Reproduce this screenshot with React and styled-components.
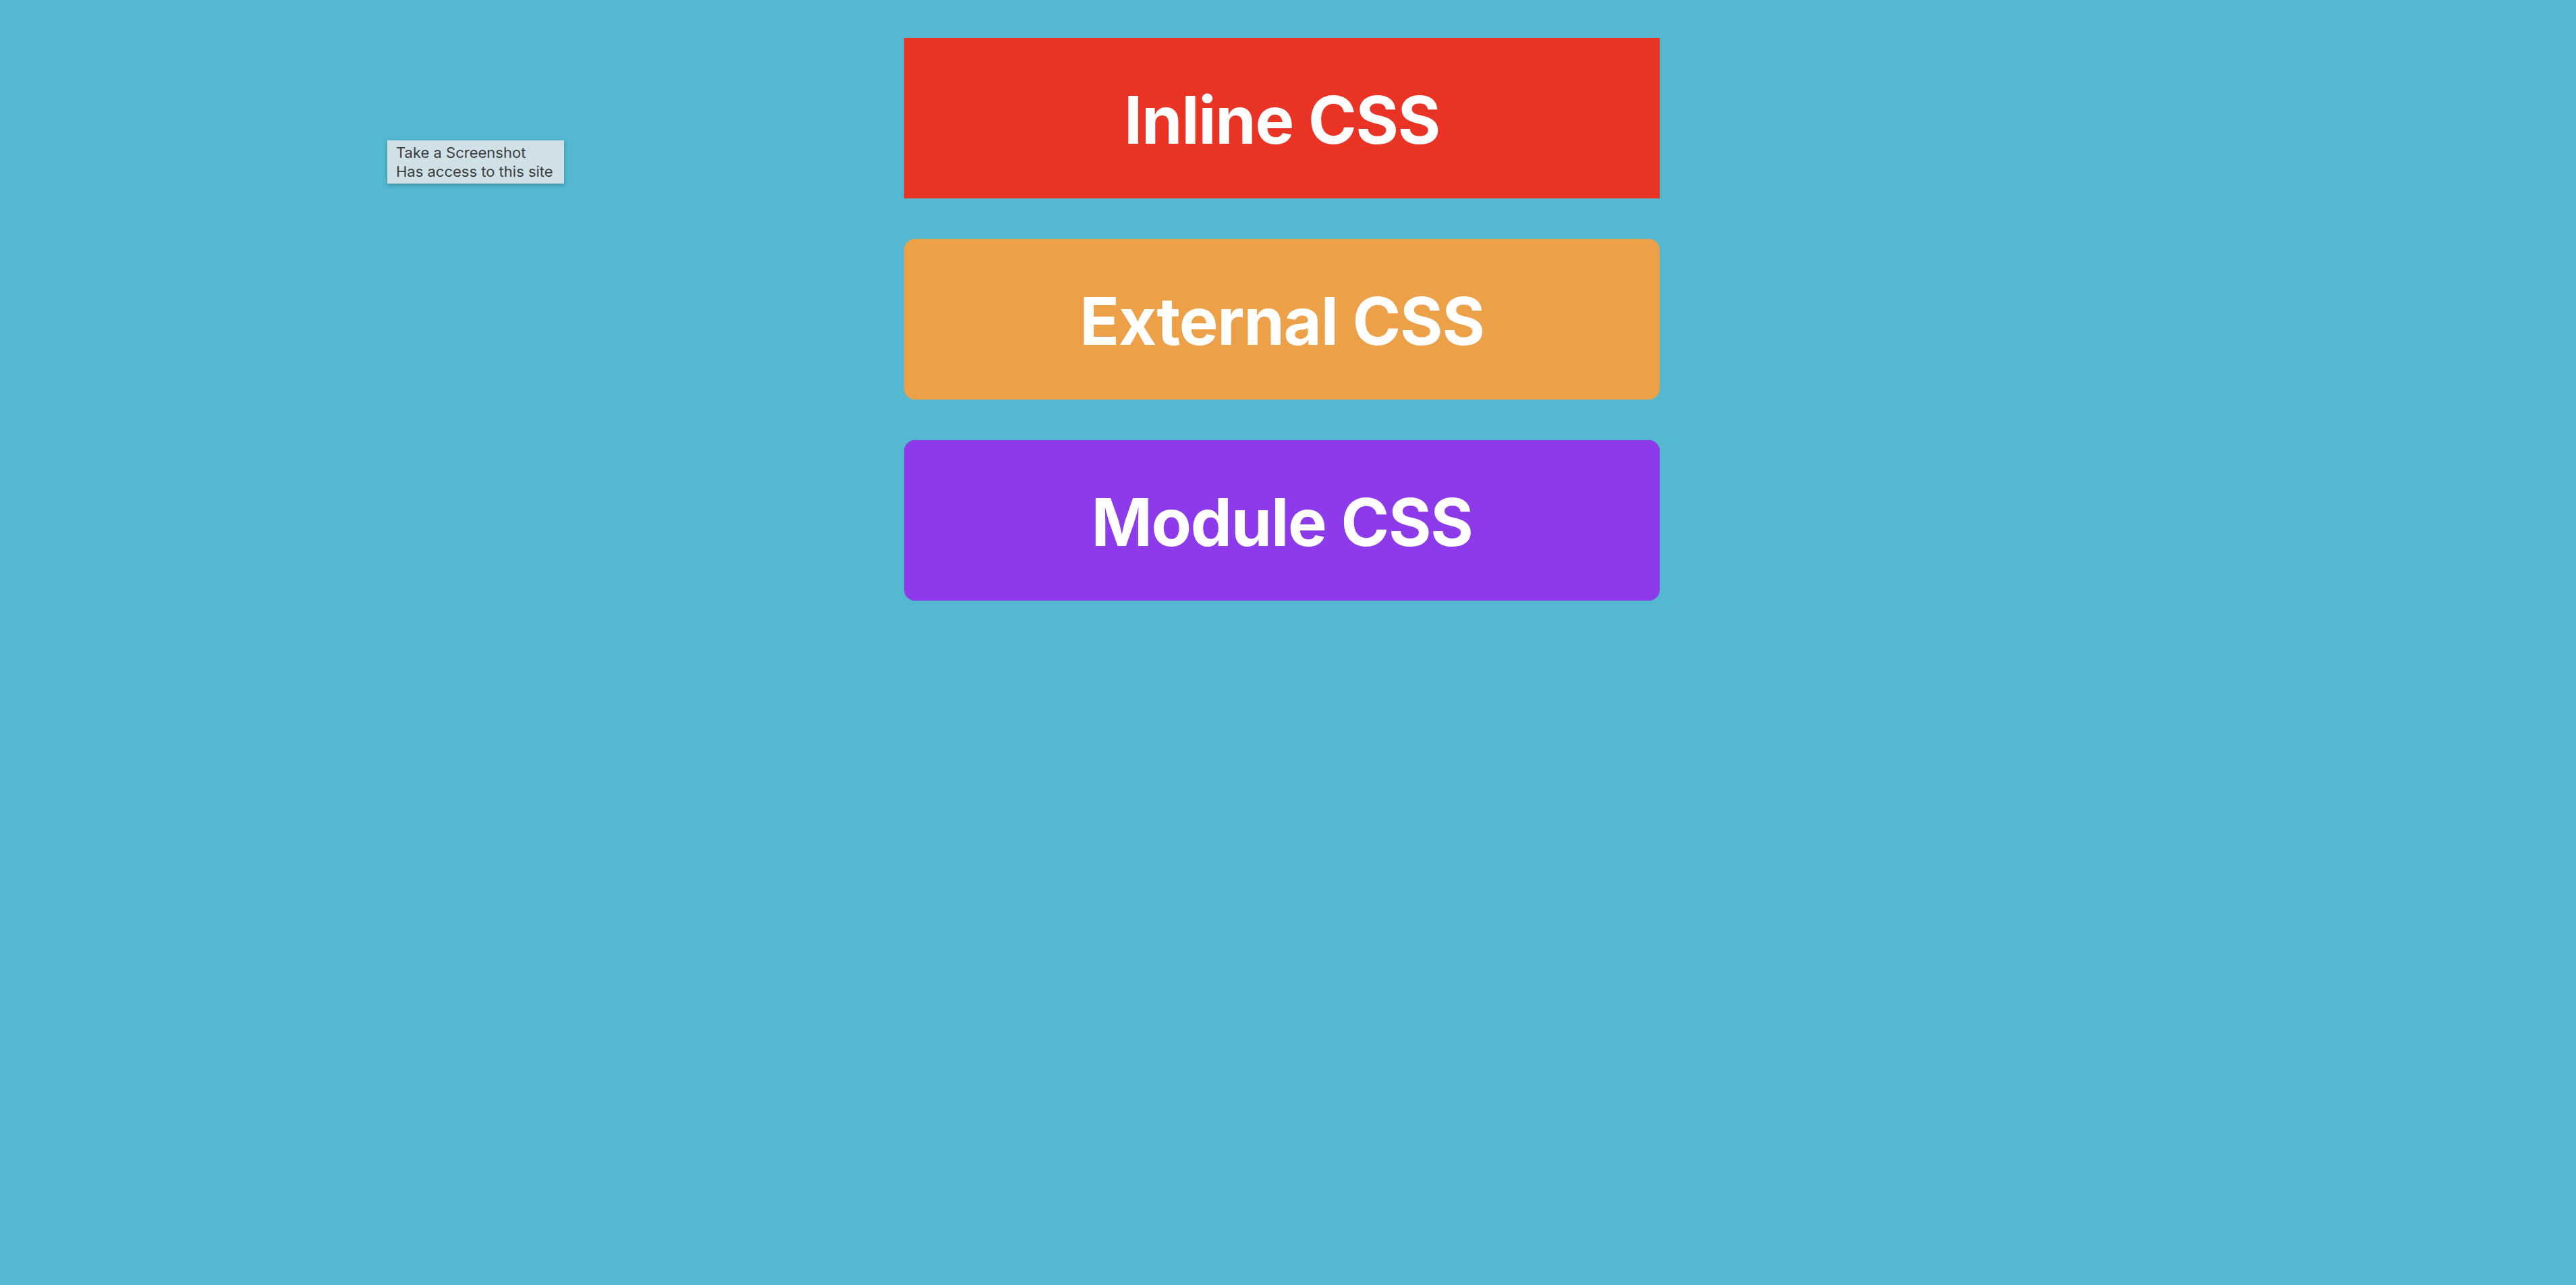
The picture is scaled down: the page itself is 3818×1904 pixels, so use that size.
import styled, { createGlobalStyle } from 'styled-components';

const GlobalStyle = createGlobalStyle`
  html, body {
    margin: 0;
    padding: 0;
    background-color: #53b8d0;
    font-family: Inter, "Noto Sans", sans-serif;
  }
`;

const Page = styled.div`
  /* border: 1px solid lime; */
  position: relative;
  width: 100%;
  min-height: 1904px;
  display: flex;
  flex-direction: column;
  align-items: center;
  gap: 60px;
  padding: 56px 18px 0 0;
  box-sizing: border-box;
`;

const Box = styled.div`
  width: 1120px;
  height: 238px;
  box-sizing: border-box;
  padding-top: 4px;
  display: flex;
  align-items: center;
  justify-content: center;
  background-color: ${(p) => p.$bg};
  border-radius: ${(p) => (p.$rounded ? '16px' : '0')};
  color: white;
  font-size: 97px;
  font-weight: 700;
  letter-spacing: -1.2px;
`;

const Tooltip = styled.div`
  position: absolute;
  left: 574px;
  top: 208px;
  width: 262px;
  height: 64px;
  box-sizing: border-box;
  padding: 4px 13px;
  background-color: #cfe0e6;
  color: #3b3d3f;
  font-size: 22px;
  line-height: 28px;
  box-shadow: 0 2px 6px rgba(0, 0, 0, 0.25);
`;

function App() {
  return (
    <>
      <GlobalStyle />
      <Page>
        <Box $bg="#e93324">Inline CSS</Box>
        <Box $bg="#eca048" $rounded>
          External CSS
        </Box>
        <Box $bg="#8d3bea" $rounded>
          Module CSS
        </Box>
        <Tooltip>
          Take a Screenshot
          <br />
          Has access to this site
        </Tooltip>
      </Page>
    </>
  );
}

export default App;
